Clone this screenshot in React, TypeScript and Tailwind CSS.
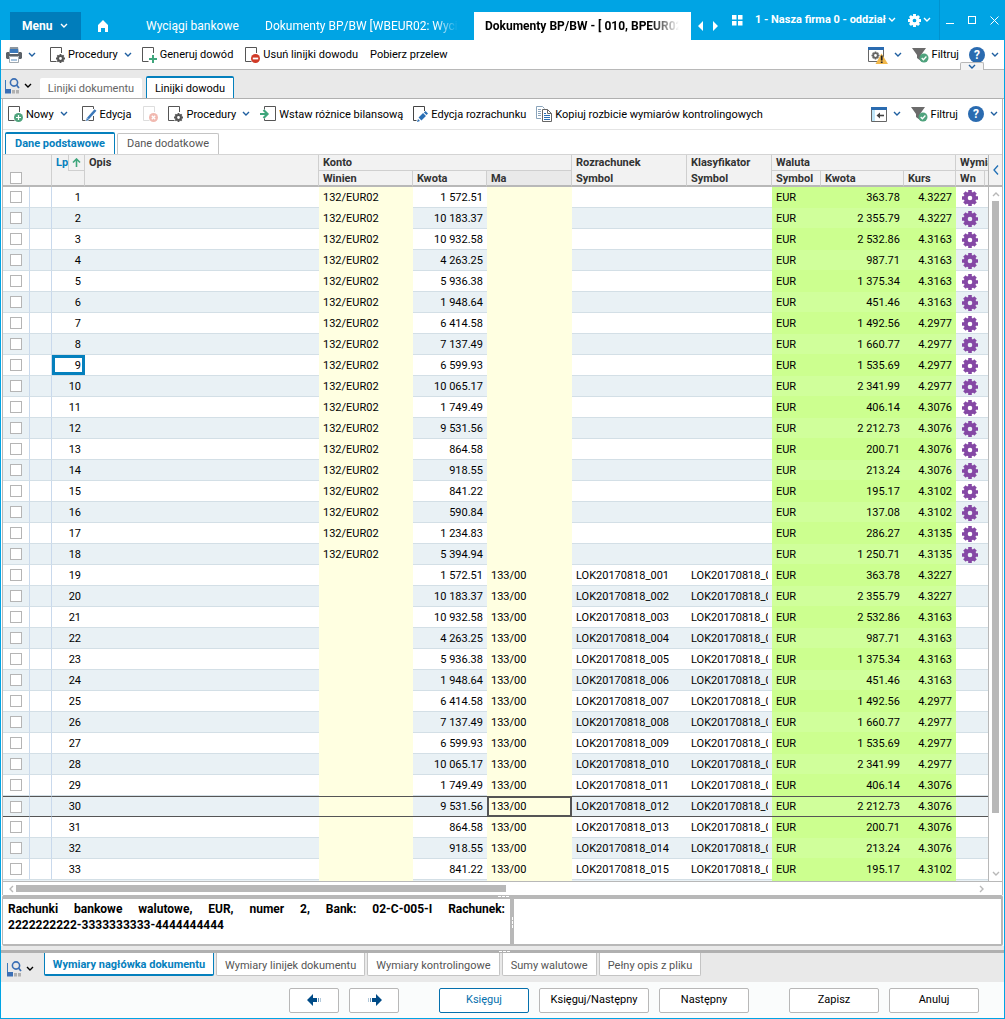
import { ReactNode } from "react";
import clsx from "clsx";

const amounts = [
  ["1 572.51", "363.78", "4.3227"],
  ["10 183.37", "2 355.79", "4.3227"],
  ["10 932.58", "2 532.86", "4.3163"],
  ["4 263.25", "987.71", "4.3163"],
  ["5 936.38", "1 375.34", "4.3163"],
  ["1 948.64", "451.46", "4.3163"],
  ["6 414.58", "1 492.56", "4.2977"],
  ["7 137.49", "1 660.77", "4.2977"],
  ["6 599.93", "1 535.69", "4.2977"],
  ["10 065.17", "2 341.99", "4.2977"],
  ["1 749.49", "406.14", "4.3076"],
  ["9 531.56", "2 212.73", "4.3076"],
  ["864.58", "200.71", "4.3076"],
  ["918.55", "213.24", "4.3076"],
  ["841.22", "195.17", "4.3102"],
  ["590.84", "137.08", "4.3102"],
  ["1 234.83", "286.27", "4.3135"],
  ["5 394.94", "1 250.71", "4.3135"],
];

const rows = Array.from({ length: 33 }, (_, i) => {
  const debit = i < 18;
  const [kwota, waluta, kurs] = amounts[i % 18];
  const symbol = debit ? "" : "LOK20170818_" + String(i - 17).padStart(3, "0");
  return { lp: i + 1, debit, kwota, waluta, kurs, symbol };
});

const Chevron = ({ className = "text-[#1f5fa0]" }: { className?: string }) => (
  <svg width="8" height="6" viewBox="0 0 8 6" fill="none" stroke="currentColor" strokeWidth="1.4" className={clsx("shrink-0", className)}>
    <path d="M1 1l3 3 3-3" />
  </svg>
);

const Gear = ({ size = 16, className }: { size?: number; className?: string }) => (
  <svg width={size} height={size} viewBox="0 0 16 16" fill="none" stroke="currentColor" className={className}>
    <circle cx="8" cy="8" r="4.3" strokeWidth="4" />
    <path strokeWidth="3.6" d="M8 0v3M8 13v3M0 8h3M13 8h3M2.4 2.4l2.2 2.2M11.4 11.4l2.2 2.2M13.6 2.4l-2.2 2.2M4.6 11.4l-2.2 2.2" />
  </svg>
);

const DocIcon = ({ children, stroke = "#555" }: { children?: ReactNode; stroke?: string }) => (
  <svg width="15" height="16" viewBox="0 0 15 16" fill="none" className="shrink-0 overflow-visible">
    <path d="M11.5 6V.5H.5v14h6" stroke={stroke} />
    {children}
  </svg>
);

const DocGear = () => (
  <DocIcon>
    <circle cx="10.5" cy="11.5" r="2.4" stroke="#555" strokeWidth="2" />
    <path stroke="#555" strokeWidth="1.8" d="M10.5 7v2M10.5 14v2M6 11.5h2M13 11.5h2M7.3 8.3l1.4 1.4M12.3 13.3l1.4 1.4M13.7 8.3l-1.4 1.4M8.7 13.3l-1.4 1.4" />
  </DocIcon>
);

const DocPlus = () => (
  <DocIcon>
    <path d="M11 8v8M7 12h8" stroke="#3fa67c" strokeWidth="2" />
  </DocIcon>
);

const DocRemove = () => (
  <DocIcon>
    <circle cx="10.5" cy="11.5" r="4.5" fill="#d13b28" />
    <path d="M7.8 11.5h5.4" stroke="#fff" strokeWidth="1.8" />
  </DocIcon>
);

const DocNew = () => (
  <DocIcon>
    <circle cx="10.5" cy="11.5" r="4.5" fill="#4fa37d" />
    <path d="M10.5 9v5M8 11.5h5" stroke="#fff" strokeWidth="1.2" />
  </DocIcon>
);

const DocDelete = () => (
  <DocIcon stroke="#ddd">
    <circle cx="10.5" cy="11.5" r="4.5" fill="#f1b9b0" />
    <path d="M8.8 9.8l3.4 3.4M12.2 9.8l-3.4 3.4" stroke="#fff" strokeWidth="1.3" />
  </DocIcon>
);

const DocPencil = () => (
  <svg width="15" height="16" viewBox="0 0 15 16" fill="none" className="shrink-0">
    <path d="M11.5 3V.5H.5v14h3M11.5 10v4.5h-5" stroke="#555" />
    <path d="M6 12.5l7.5-8.5" stroke="#3b78b9" strokeWidth="2.6" />
    <path d="M4 15l.8-3.2L7 14z" fill="#3b78b9" />
  </svg>
);

const DocSettle = () => (
  <svg width="15" height="16" viewBox="0 0 15 16" fill="none" className="shrink-0">
    <path d="M11.5 5V.5H.5v14h3" stroke="#444" />
    <path d="M7 13l4.5-4.5" stroke="#2a6fb5" strokeWidth="4" />
    <path d="M12.2 7.8l1.6-1.6" stroke="#2a6fb5" strokeWidth="3.6" />
    <path d="M4 16l1-3L7 15z" fill="#2a6fb5" />
  </svg>
);

const InsertIcon = () => (
  <svg width="16" height="16" viewBox="0 0 16 16" fill="none" className="shrink-0">
    <path d="M4.5 3.5V.5h11v14h-11v-2" stroke="#555" />
    <path d="M0 8h7M3.5 4L7.5 8l-4 4" stroke="#3fa67c" strokeWidth="2.2" />
  </svg>
);

const CopyIcon = () => (
  <svg width="16" height="16" viewBox="0 0 16 16" fill="none" className="shrink-0">
    <path d="M5 12.5H.5V.5h6l2 2M2 3.500h3M2 5.500h3M2 7.500h3M2 9.500h3" stroke="#8aa4bb" />
    <path d="M6.5 3.5h5l4 4v8h-9z" fill="#fff" stroke="#666" />
    <path d="M11.5 3.5v4h4" stroke="#666" />
    <path d="M8 7.500h2M8 9.500h6M8 11.500h6M8 13.500h6" stroke="#2a6fb5" />
  </svg>
);

const PrinterIcon = () => (
  <svg width="16" height="16" viewBox="0 0 16 16" className="shrink-0">
    <path d="M4 0h8l1 6H3z" fill="#8d969e" />
    <path d="M4 2h8v4H4z" fill="#3b78b9" />
    <path d="M1 5h2l1 2h8l1-2h2l1 1v5l-1 1h-2V9H3v3H1l-1-1V6z" fill="#5a6168" />
    <path d="M3.5 9.5h9v6h-9z" fill="#fff" stroke="#a0a8af" />
    <path d="M5 12h6v2H5z" fill="#a9c4de" />
  </svg>
);

const FilterIcon = () => (
  <svg width="17" height="16" viewBox="0 0 17 16" fill="none" className="shrink-0">
    <path d="M0 1h14L9 8v6l-4-3V8z" fill="#6b6b6b" />
    <circle cx="12" cy="11" r="4.5" fill="#4fa37d" />
    <path d="M9.7 11l1.7 1.7 3-3.2" stroke="#fff" strokeWidth="1.3" />
  </svg>
);

const HelpIcon = () => (
  <span className="flex size-4 shrink-0 items-center justify-center rounded-full bg-[#2a6bb0] text-xs font-bold text-white">?</span>
);

const ReportIcon = () => (
  <svg width="20" height="18" viewBox="0 0 20 18" fill="none" className="shrink-0">
    <path d="M.5 1.5h15v14H.5z" stroke="#666" fill="#fff" />
    <path d="M0 1h16v3H0z" fill="#2a6bb0" />
    <circle cx="7.5" cy="9.5" r="2.3" stroke="#666" strokeWidth="1.8" />
    <path stroke="#666" strokeWidth="1.6" d="M7.5 5.5V7M7.5 12v1.5M3.5 9.5H5M10 9.5h1.5M4.7 6.7l1 1M9.3 11.3l1 1M10.3 6.7l-1 1M5.7 11.3l-1 1" />
    <path d="M13.5 7.5L20 18H7.5z" fill="#f2b84b" />
    <path d="M13.7 9.5v5M13.7 15.5V17" stroke="#222" strokeWidth="1.8" />
  </svg>
);

const PaneIcon = () => (
  <svg width="16" height="15" viewBox="0 0 16 15" fill="none" className="shrink-0">
    <path d="M.5 1.5h15v13H.5z" stroke="#666" fill="#fff" />
    <path d="M1 3h3v11H1z" fill="#bfe6f8" />
    <path d="M0 0h16v3H0z" fill="#2a6bb0" />
    <path d="M7 8.5h6" stroke="#444" strokeWidth="1.6" />
    <path d="M9 5.5v6l-3.500-3z" fill="#444" />
  </svg>
);

const ViewIcon = () => (
  <svg width="15" height="16" viewBox="0 0 15 16" fill="none" className="shrink-0">
    <path d="M.5 2v13" stroke="#3b78b9" />
    <path d="M0 11h6v4.500H0z" fill="#3b6fb5" />
    <path d="M7 12h3v3.500H7zM11 12h3v3.500h-3z" fill="#b0b0b0" />
    <circle cx="9" cy="4.5" r="3.6" stroke="#3b6fb5" strokeWidth="1.6" />
    <path d="M11.5 7l2.5 3" stroke="#3b6fb5" strokeWidth="1.8" />
  </svg>
);

const Arrow = () => (
  <svg width="15" height="12" viewBox="0 0 15 12" fill="#004b87">
    <path d="M0 6l6-6v4h4v4H6v4z" />
    <path d="M11 4h1v4h-1z" opacity=".6" />
    <path d="M13 4h1v4h-1z" opacity=".3" />
  </svg>
);

const Grip = ({ className }: { className?: string }) => (
  <svg width="11" height="1" viewBox="0 0 11 1" fill="#fff" className={className}>
    <path d="M0 0h3v1H0zM4 0h3v1H4zM8 0h3v1H8z" />
  </svg>
);

const ToolButton = ({ icon, label, menu, className }: { icon?: ReactNode; label?: string; menu?: boolean; className?: string }) => (
  <button type="button" className={clsx("flex items-center whitespace-nowrap", className)}>
    {icon}
    {label && <span className={clsx("pt-0.5", icon && "ml-[3px]")}>{label}</span>}
    {menu && <Chevron className="ml-1.5 text-[#1f5fa0]" />}
  </button>
);

const Check = ({ label }: { label: string }) => (
  <input type="checkbox" aria-label={label} className="block size-3 appearance-none border border-[#b5b5b5] bg-white" />
);

const Th = ({ children, span, group, last, className }: { children?: ReactNode; span?: number; group?: boolean; last?: boolean; className?: string }) => (
  <th
    colSpan={span}
    className={clsx(
      "h-4 overflow-hidden border-r border-[#cfcfcf] p-0 pt-0.5 pl-1 text-left align-top leading-3 font-bold whitespace-nowrap",
      group && "border-b",
      last && "border-b-2 border-b-[#b8b8b8]",
      className,
    )}
  >
    {children}
  </th>
);

const GridTable = () => (
  <table className="w-full table-fixed border-separate border-spacing-0 text-[11px]">
    <colgroup>
      <col className="w-[27px]" />
      <col className="w-[22px]" />
      <col className="w-[33px]" />
      <col />
      <col className="w-[94px]" />
      <col className="w-[74px]" />
      <col className="w-[85px]" />
      <col className="w-[115px]" />
      <col className="w-[85px]" />
      <col className="w-[49px]" />
      <col className="w-[83px]" />
      <col className="w-[52px]" />
      <col className="w-[29px]" />
      <col className="w-[3px]" />
    </colgroup>
    <thead className="bg-[#f2f2f2] text-[#333]">
      <tr>
        <th colSpan={2} rowSpan={2} className="border-r border-b-2 border-r-[#cfcfcf] border-b-[#b8b8b8] p-0 pb-px pl-[7px] align-bottom">
          <Check label="Zaznacz wszystkie" />
        </th>
        <th rowSpan={2} className="border-r border-b-2 border-r-[#cfcfcf] border-b-[#b8b8b8] p-0 align-top">
          <div className="flex h-4 items-center justify-between text-[#0580bd]">
            <span className="pl-1">Lp</span>
            <span className="flex size-4 items-center justify-center border-b border-l border-[#cfcfcf]">
              <svg width="9" height="9" viewBox="0 0 9 9" fill="none" stroke="#3fa67c" strokeWidth="1.6">
                <path d="M4.5 9V1M1 4.500L4.500 1 8 4.500" />
              </svg>
            </span>
          </div>
        </th>
        <th rowSpan={2} className="border-r border-b-2 border-r-[#cfcfcf] border-b-[#b8b8b8] p-0 pt-0.5 pl-1 text-left align-top leading-3">
          Opis
        </th>
        <Th span={3} group>Konto</Th>
        <Th>Rozrachunek</Th>
        <Th>Klasyfikator</Th>
        <Th span={3} group>Waluta</Th>
        <Th span={2} group className="border-r-0">Wymiary</Th>
      </tr>
      <tr>
        <Th last>Winien</Th>
        <Th last>Kwota</Th>
        <Th last className="bg-[#e9e9e9]">Ma</Th>
        <Th last>Symbol</Th>
        <Th last>Symbol</Th>
        <Th last>Symbol</Th>
        <Th last>Kwota</Th>
        <Th last>Kurs</Th>
        <Th last>Wn</Th>
        <Th last className="border-r-0" />
      </tr>
    </thead>
    <tbody>
      {rows.map((r) => {
        const current = r.lp === 30;
        const even = r.lp % 2 === 0;
        const pad = current ? "pt-px" : "pt-0.5";
        const line = current ? "border-y border-[#555]" : "border-b border-[#d3dfe6]";
        const yellow = current ? "border-y border-[#555] bg-[#ffffe1]" : "border-b border-[#ffffe1] bg-[#ffffe1]";
        const green = current
          ? "border-y border-[#555] bg-[#d0ff9b]"
          : even
            ? "border-b border-[#ccff8f] bg-[#d0ff9b]"
            : "border-b border-[#ccff8f] bg-[#ccff8f]";
        return (
          <tr key={r.lp} className={clsx("h-[21px] leading-[18px] whitespace-nowrap", even ? "bg-[#e9f1f5]" : "bg-white")}>
            <td className={clsx("border-r border-r-[#c9d9ec] p-0 pl-[7px]", line)}>
              <Check label={"Wiersz " + r.lp} />
            </td>
            <td className={clsx("border-r border-r-[#c9d9ec] p-0", line)} />
            <td className={clsx("p-0 text-right", line)}>
              <div className={clsx("pr-1", pad, r.lp === 9 && "outline-3 -outline-offset-3 outline-[#0580bd]")}>{r.lp}</div>
            </td>
            <td className={clsx("p-0", line)} />
            <td className={clsx("p-0 pl-1", pad, yellow)}>{r.debit && "132/EUR02"}</td>
            <td className={clsx("p-0 pr-1 text-right", pad, line)}>{r.kwota}</td>
            <td className={clsx("p-0 pl-1", pad, yellow, current && "outline-2 -outline-offset-2 outline-[#555]")}>{!r.debit && "133/00"}</td>
            <td className={clsx("p-0 pl-1", pad, line)}>{r.symbol}</td>
            <td className={clsx("p-0 px-1", pad, line)}>
              <div className="overflow-hidden">{r.symbol}</div>
            </td>
            <td className={clsx("p-0 pl-1", pad, green)}>EUR</td>
            <td className={clsx("p-0 pr-1 text-right", pad, green)}>{r.waluta}</td>
            <td className={clsx("p-0 pr-1 text-right", pad, green)}>{r.kurs}</td>
            <td className={clsx("p-0 pl-1.5", pad, line)}>{r.debit && <Gear className="block text-[#8548a5]" />}</td>
            <td className={clsx("p-0", line)} />
          </tr>
        );
      })}
      {/* top edge of the next row */}
      <tr className="h-px bg-[#e9f1f5]">
        <td colSpan={4} className="p-0" />
        <td className="bg-[#ffffe1] p-0" />
        <td className="p-0" />
        <td className="bg-[#ffffe1] p-0" />
        <td colSpan={2} className="p-0" />
        <td colSpan={3} className="bg-[#ccff8f] p-0" />
        <td colSpan={2} className="p-0" />
      </tr>
    </tbody>
  </table>
);

const TopBar = () => (
  <header className="flex h-10 items-end bg-[#00a4e4] text-xs text-white">
    <button type="button" className="ml-2.5 flex h-7 w-[71px] shrink-0 items-center bg-[#007dbb] pl-3 font-bold">
      Menu
      <Chevron className="ml-2 text-white" />
    </button>
    <a href="#" aria-label="Start" className="ml-4 flex h-7 w-[49px] shrink-0 items-center">
      <svg width="12" height="12" viewBox="0 0 12 12" fill="#fff">
        <path d="M6 0l5 5v7H8V8H4v4H1V5z" />
      </svg>
    </a>
    <a href="#" className="w-[119px] shrink-0 leading-7 whitespace-nowrap">Wyciągi bankowe</a>
    <a href="#" className="w-[193px] shrink-0 overflow-hidden mask-r-from-[170px] mask-r-to-full leading-7 whitespace-nowrap">
      Dokumenty BP/BW [WBEUR02: Wyciągi]
    </a>
    <a href="#" className="ml-4 h-7 w-[217px] shrink-0 bg-white pr-3 pl-[11px] leading-7 text-black">
      <span className="block overflow-hidden mask-r-from-85% mask-r-to-100% font-bold whitespace-nowrap">Dokumenty BP/BW - [ 010, BPEUR02 ]</span>
    </a>
    <div className="flex h-7 items-center pl-1.5">
      <svg width="22" height="10" viewBox="0 0 22 10" fill="#fff">
        <path d="M6 0v10L1 5zM16 0v10l5-5z" />
      </svg>
    </div>
    <div className="ml-auto flex h-10 shrink-0 items-center">
      <svg width="11" height="11" viewBox="0 0 11 11" fill="#fff" className="mr-3">
        <path d="M0 0h4.500v4.500H0zM6 0h4.500v4.500H6zM0 6h4.500v4.500H0zM6 6h4.500v4.500H6z" />
      </svg>
      <button type="button" className="flex items-center gap-0.5 text-[11px] font-bold whitespace-nowrap">
        1 - Nasza firma 0 - oddział
        <Chevron className="text-white" />
      </button>
      <button type="button" aria-label="Ustawienia" className="ml-3 flex items-center gap-0.5">
        <Gear size={13} />
        <Chevron className="text-white" />
      </button>
      <div className="ml-2 flex h-10 items-center gap-3.5 border-l border-[#0093d0] px-1.5 text-white">
        <button type="button" aria-label="Minimalizuj" className="h-2 w-2 border-b border-white" />
        <button type="button" aria-label="Maksymalizuj" className="size-2 border border-white" />
        <button type="button" aria-label="Zamknij">
          <svg width="9" height="9" viewBox="0 0 9 9" stroke="#fff">
            <path d="M.5.5l8 8M8.5.5l-8 8" />
          </svg>
        </button>
      </div>
    </div>
  </header>
);

const bottomTabs = ["Wymiary linijek dokumentu", "Wymiary kontrolingowe", "Sumy walutowe", "Pełny opis z pliku"];
const footerButton = "h-[25px] w-[90px] rounded-xs border border-[#b8b8b8] bg-white pt-px";

export default function App() {
  return (
    <div className="border-x border-b border-[#00a4e4] bg-white font-[Roboto,sans-serif] text-[11px] text-black">
      <div className="-mx-px">
        <TopBar />
      </div>
      <div className="relative flex h-[30px] items-center border-b border-[#b8b8b8] px-[5px]">
        <ToolButton icon={<PrinterIcon />} menu />
        <ToolButton icon={<DocGear />} label="Procedury" menu className="ml-3.5" />
        <ToolButton icon={<DocPlus />} label="Generuj dowód" className="ml-2.5" />
        <ToolButton icon={<DocRemove />} label="Usuń linijki dowodu" className="ml-3" />
        <ToolButton label="Pobierz przelew" className="ml-3" />
        <ToolButton icon={<ReportIcon />} menu className="ml-auto" />
        <ToolButton icon={<FilterIcon />} label="Filtruj" className="ml-2.5" />
        <ToolButton icon={<HelpIcon />} menu className="ml-2.5" />
        <button type="button" aria-label="Zwiń" className="absolute right-5 -bottom-px flex h-2 w-6 items-center justify-center rounded-t-xs border border-b-0 border-[#b8b8b8] bg-[#f4f4f4]">
          <Chevron />
        </button>
      </div>
      <div className="flex h-[29px] items-end border-b border-[#b0b0b0] bg-[#e9e9e9] pl-1">
        <button type="button" aria-label="Widok" className="mr-2 mb-1 flex items-center gap-1">
          <ViewIcon />
          <Chevron className="text-black" />
        </button>
        <button type="button" className="mr-1 h-5 w-[102px] rounded-t-xs bg-white pt-0.5 text-[#666]">Linijki dokumentu</button>
        <button type="button" className="h-[22px] w-[88px] rounded-t-xs border border-t-2 border-b-0 border-[#0580bd] bg-white pt-0.5">Linijki dowodu</button>
      </div>
      <div className="mx-px border-x border-[#b8b8b8]">
        <div className="flex h-[31px] items-center border-b border-[#e4e4e4] pr-1 pl-[5px]">
          <ToolButton icon={<DocNew />} label="Nowy" menu />
          <ToolButton icon={<DocPencil />} label="Edycja" className="ml-3.5" />
          <ToolButton icon={<DocDelete />} className="ml-3" />
          <ToolButton icon={<DocGear />} label="Procedury" menu className="ml-2.5" />
          <ToolButton icon={<InsertIcon />} label="Wstaw różnice bilansową" className="ml-2.5" />
          <ToolButton icon={<DocSettle />} label="Edycja rozrachunku" className="ml-2.5" />
          <ToolButton icon={<CopyIcon />} label="Kopiuj rozbicie wymiarów kontrolingowych" className="ml-2.5" />
          <ToolButton icon={<PaneIcon />} menu className="ml-auto" />
          <ToolButton icon={<FilterIcon />} label="Filtruj" className="ml-2.5" />
          <ToolButton icon={<HelpIcon />} menu className="ml-2.5" />
        </div>
        <div className="flex h-6 items-end gap-0.5 pl-0.5">
          <button type="button" className="h-[22px] w-[110px] rounded-t-xs border border-t-2 border-b-0 border-[#0580bd] bg-white font-bold text-[#0580bd]">Dane podstawowe</button>
          <button type="button" className="h-[21px] w-[102px] rounded-t-xs border border-b-0 border-[#c4c4c4] text-[#555]">Dane dodatkowe</button>
        </div>
        <div className="flex border-y border-t-[#d4d4d4] border-b-[#b8b8b8]">
          <div className="min-w-0 flex-1 border-r border-[#b8b8b8]">
            <GridTable />
          </div>
          <div className="flex w-[13px] flex-col items-center">
            <button type="button" aria-label="Pokaż panel" className="flex h-8 w-full items-center justify-center border-b-2 border-[#b8b8b8] bg-[#f2f2f2]">
              <svg width="6" height="10" viewBox="0 0 6 10" fill="none" stroke="#1f6fb5" strokeWidth="1.3">
                <path d="M5 .5L1 5l4 4.500" />
              </svg>
            </button>
            <Chevron className="my-1 rotate-180 text-[#b8b8b8]" />
            <div className="h-[612px] w-[7px] bg-[#b8b8b8]" />
            <Chevron className="mt-auto mb-1 text-[#b8b8b8]" />
          </div>
        </div>
        <div className="flex h-[13px] items-center pr-4 pl-1 text-[#b8b8b8]">
          <Chevron className="mr-px rotate-90" />
          <div className="h-[7px] w-1/2 bg-[#b8b8b8]" />
          <Chevron className="ml-auto -rotate-90" />
        </div>
      </div>
      <div className="relative mx-px flex h-[51px] rounded-xs border-t-4 border-r-2 border-b-2 border-l border-[#b8b8b8]">
        <Grip className="absolute -top-[3px] left-1/2 -ml-1" />
        <p className="relative w-[511px] shrink-0 border-r-4 border-[#b8b8b8] px-[5px] pt-0.5 text-justify text-xs leading-4 font-bold">
          Rachunki bankowe walutowe, EUR, numer 2, Bank: 02-C-005-I Rachunek:{" "}
          <span className="whitespace-nowrap">2222222222-3333333333-4444444444</span>
          <Grip className="absolute top-1/2 -right-2 rotate-90" />
        </p>
      </div>
      <div className="bg-[#e9e9e9] pt-1">
        <div className="relative flex h-8 items-start border-t-3 border-[#b0b0b0] pl-1.5 text-[#555]">
          <Grip className="absolute -top-0.5 left-1/2 -ml-1" />
          <button type="button" aria-label="Widok dolny" className="mt-2 mr-2.5 flex items-center gap-1">
            <ViewIcon />
            <Chevron className="text-black" />
          </button>
          <button type="button" className="mr-0.5 h-[23px] w-[170px] rounded-b-xs border border-t-0 border-b-2 border-[#0580bd] bg-white pt-1 font-bold text-[#0580bd]">
            Wymiary nagłówka dokumentu
          </button>
          {bottomTabs.map((tab) => (
            <button key={tab} type="button" className="mr-0.5 h-[23px] rounded-b-xs border border-t-0 border-[#c4c4c4] bg-white px-2 pt-1">
              {tab}
            </button>
          ))}
        </div>
      </div>
      <footer className="flex h-9 items-center justify-end gap-2.5 bg-[#fafcfc] pr-[25px]">
        <button type="button" aria-label="Poprzedni" className="flex h-[25px] w-[50px] items-center justify-center rounded-xs border border-[#b8b8b8] bg-white">
          <Arrow />
        </button>
        <button type="button" aria-label="Dalej" className="mr-[30px] flex h-[25px] w-[50px] items-center justify-center rounded-xs border border-[#b8b8b8] bg-white">
          <span className="rotate-180">
            <Arrow />
          </span>
        </button>
        <button type="button" className="h-[25px] w-[90px] rounded-xs border border-[#0570ad] bg-white pt-px text-[#0570ad]">Księguj</button>
        <button type="button" className="h-[25px] w-[110px] rounded-xs border border-[#b8b8b8] bg-white pt-px">Księguj/Następny</button>
        <button type="button" className={clsx(footerButton, "mr-[30px]")}>Następny</button>
        <button type="button" className={footerButton}>Zapisz</button>
        <button type="button" className={footerButton}>Anuluj</button>
      </footer>
    </div>
  );
}
